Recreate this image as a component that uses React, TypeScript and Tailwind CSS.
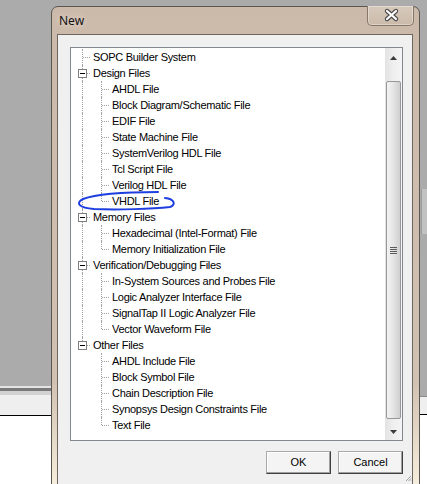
import React from "react";

type Group = { label: string; children?: string[] };

const TREE: Group[] = [
  { label: "SOPC Builder System" },
  {
    label: "Design Files",
    children: [
      "AHDL File",
      "Block Diagram/Schematic File",
      "EDIF File",
      "State Machine File",
      "SystemVerilog HDL File",
      "Tcl Script File",
      "Verilog HDL File",
      "VHDL File",
    ],
  },
  { label: "Memory Files", children: ["Hexadecimal (Intel-Format) File", "Memory Initialization File"] },
  {
    label: "Verification/Debugging Files",
    children: [
      "In-System Sources and Probes File",
      "Logic Analyzer Interface File",
      "SignalTap II Logic Analyzer File",
      "Vector Waveform File",
    ],
  },
  {
    label: "Other Files",
    children: [
      "AHDL Include File",
      "Block Symbol File",
      "Chain Description File",
      "Synopsys Design Constraints File",
      "Text File",
    ],
  },
];

type Line = "full" | "top" | "none";

function VLine({ left, kind }: { left: string; kind: Line }) {
  if (kind === "none") return null;
  return (
    <span
      className={`absolute top-0 border-l border-dotted border-[#a0a0a0] ${left} ${kind === "full" ? "h-4" : "h-2"}`}
    />
  );
}

function TreeRow({
  label,
  depth,
  rootLine,
  childLine = "none",
  expander = false,
}: {
  label: string;
  depth: 0 | 1;
  rootLine: Line;
  childLine?: Line;
  expander?: boolean;
}) {
  return (
    <div className="relative h-4 whitespace-nowrap">
      <VLine left="left-[11px]" kind={rootLine} />
      <VLine left="left-[30px]" kind={childLine} />
      {depth === 0 ? (
        <span className="absolute left-[12px] top-[8px] w-[7px] border-t border-dotted border-[#a0a0a0]" />
      ) : (
        <span className="absolute left-[31px] top-[8px] w-[7px] border-t border-dotted border-[#a0a0a0]" />
      )}
      {expander && (
        <span className="absolute left-[7px] top-[4px] flex h-[9px] w-[9px] items-center justify-center border border-[#7f7f7f] bg-white">
          <span className="h-px w-[5px] bg-black" />
        </span>
      )}
      <span
        className={`block leading-4 tracking-[-0.3px] text-black ${depth === 0 ? "pl-[22px]" : "pl-[41px]"}`}
      >
        {label}
      </span>
    </div>
  );
}

function Tree() {
  const rows: React.ReactNode[] = [];
  TREE.forEach((g, gi) => {
    const lastGroup = gi === TREE.length - 1;
    rows.push(
      <TreeRow
        key={g.label}
        label={g.label}
        depth={0}
        rootLine={lastGroup ? "top" : "full"}
        expander={!!g.children}
      />
    );
    g.children?.forEach((c, ci) => {
      const lastChild = ci === g.children!.length - 1;
      rows.push(
        <TreeRow
          key={c}
          label={c}
          depth={1}
          rootLine={lastGroup ? "none" : "full"}
          childLine={lastChild ? "top" : "full"}
        />
      );
    });
  });
  return <div className="relative flex-1 overflow-hidden pt-px">{rows}</div>;
}

function ScrollBar() {
  return (
    <div className="flex w-[17px] flex-col bg-gradient-to-r from-[#e3e3e3] via-[#efefef] to-[#f4f4f4]">
      <div className="flex h-[17px] items-center justify-center pt-[3px]">
        <svg width="7" height="4" viewBox="0 0 7 4">
          <path d="M3.5 0 L7 4 L0 4 Z" fill="#3c3c3c" />
        </svg>
      </div>
      <div className="h-[16px]" />
      <div className="mx-px flex h-[338px] w-[15px] items-center justify-center rounded-[2px] border border-[#979797] bg-gradient-to-r from-[#f4f4f4] via-[#e4e4e4] to-[#cfcfcf]">
        <div className="flex flex-col gap-px">
          <span className="h-px w-[7px] bg-[#5c5c5c]" />
          <span className="h-px w-[7px] bg-[#5c5c5c]" />
          <span className="h-px w-[7px] bg-[#5c5c5c]" />
          <span className="h-px w-[7px] bg-[#5c5c5c]" />
        </div>
      </div>
      <div className="h-[4px]" />
      <div className="flex h-[17px] items-center justify-center">
        <svg width="7" height="4" viewBox="0 0 7 4">
          <path d="M0 0 L7 0 L3.5 4 Z" fill="#3c3c3c" />
        </svg>
      </div>
    </div>
  );
}

function DialogButton({ children }: { children: React.ReactNode }) {
  return (
    <button className="flex h-[23px] w-[65px] items-center justify-center border border-b-[#3f3f3f] border-l-[#a9a9a9] border-r-[#3f3f3f] border-t-[#a9a9a9] bg-[#f4f4f4] text-[11px] text-black shadow-[inset_-1px_-1px_0_#a0a0a0,inset_1px_1px_0_#ffffff]">
      {children}
    </button>
  );
}

export default function App() {
  return (
    <div
      className="relative h-[484px] w-[427px] overflow-hidden bg-[#ababab]"
      style={{ fontFamily: '"Liberation Sans", Arial, sans-serif' }}
    >
      {/* windows behind the dialog */}
      <div className="absolute left-0 top-[386px] flex h-[98px] w-[51px] flex-col">
        <div className="h-[2px] bg-[#e4e4e4]" />
        <div className="h-[3px] bg-[#7a7a7a]" />
        <div className="h-[4px] bg-[#d2d2d2]" />
        <div className="h-[20px] bg-[#efefef]" />
        <div className="h-px bg-black" />
        <div className="flex-1 bg-white" />
      </div>
      <div className="absolute left-[421px] top-[189px] h-[45px] w-[6px] border-l border-[#9a9a9a] bg-[#c2c2c2]" />
      <div className="absolute left-[419px] top-[396px] flex h-[88px] w-[8px] flex-col border-l border-[#5a5a5a]">
        <div className="h-px bg-[#8a8a8a]" />
        <div className="h-[17px] bg-[#efefef]" />
        <div className="h-px bg-black" />
        <div className="flex-1 bg-white" />
      </div>

      {/* New dialog */}
      <div className="absolute left-[51px] top-[6px] flex h-[500px] w-[369px] flex-col rounded-t-[7px] border border-[#5c5650] bg-gradient-to-b from-[#cbb9a9] via-[#d1c1b2] via-75% to-[#fdf6e6]">
        <div className="relative flex h-[27px] items-center pl-[7px]">
          <span
            className="text-[12px] text-[#111] [text-shadow:0_0_6px_#f3ece4]"
            style={{ fontFamily: '"Noto Sans", "Open Sans", sans-serif' }}
          >
            New
          </span>
          <div className="absolute left-[315px] top-[-1px] h-[20px] w-[47px] rounded-b-[5px] border border-t-0 border-[#857769] bg-gradient-to-b from-[#d6c9bc] to-[#cbbaa9] shadow-[inset_0_0_0_1px_rgba(255,255,255,0.35)]">
            <svg className="absolute left-0 top-0" width="47" height="20" viewBox="0 0 47 20">
              <path d="M19 5 L28 13 M28 5 L19 13" stroke="#4a4a4a" strokeWidth="4.4" strokeLinecap="round" />
              <path d="M19 5 L28 13 M28 5 L19 13" stroke="#ffffff" strokeWidth="2.2" strokeLinecap="round" />
            </svg>
          </div>
        </div>
        <div className="flex flex-1 pl-[5px] pr-[6px]">
          <div className="relative flex flex-1 flex-col border border-[#6d6760] bg-[#f0f0f0] pl-[12px] pt-[12px]">
            <div className="flex h-[394px] w-[333px] border border-[#828790] bg-white text-[11px]">
              <Tree />
              <ScrollBar />
            </div>
            <div className="mt-[10px] flex w-[333px] justify-end gap-[7px]">
              <DialogButton>OK</DialogButton>
              <DialogButton>Cancel</DialogButton>
            </div>
            <svg className="absolute left-[347px] top-[440px]" width="7" height="7" viewBox="0 0 7 7">
              <path d="M6 1 L1 6 M6 3.5 L3.5 6 M6 5.5 L5.5 6" stroke="#a0a0a0" strokeWidth="1" />
            </svg>
          </div>
        </div>
      </div>

      {/* hand-drawn annotation */}
      <svg className="pointer-events-none absolute left-0 top-0" width="427" height="484" viewBox="0 0 427 484">
        <path
          d="M158 192 C128 192 96 194 83 199 C75 203 79 208 94 209 C118 210 152 209 170 207 C176 205 175 199 165 198"
          fill="none"
          stroke="#1f3ee0"
          strokeWidth="2"
          strokeLinecap="round"
        />
      </svg>
    </div>
  );
}
